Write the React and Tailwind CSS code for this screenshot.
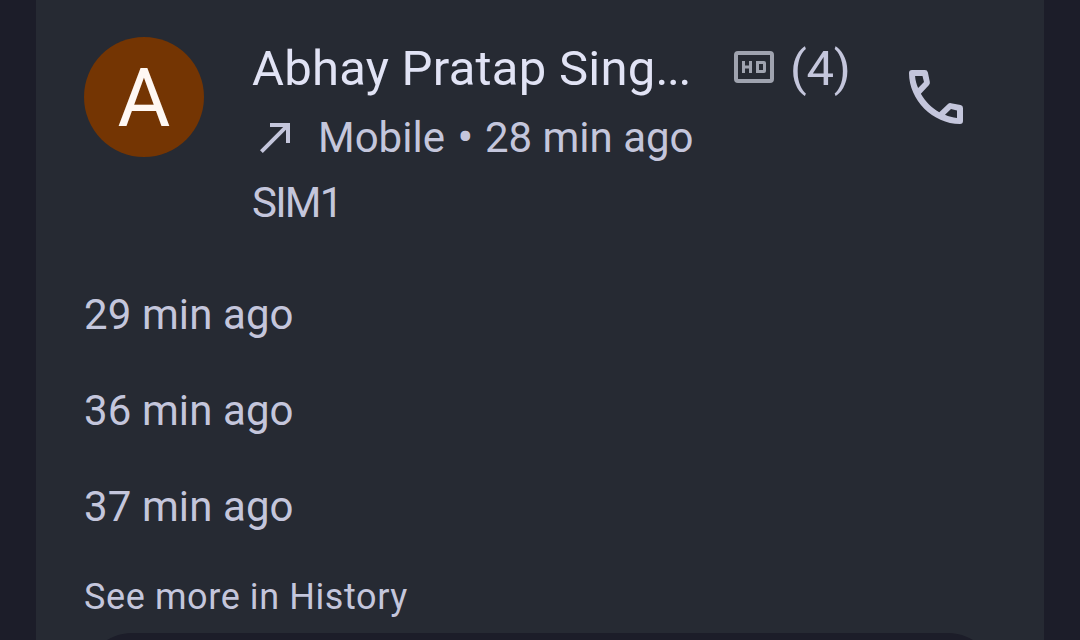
import React from 'react';

const olderCalls = ['29 min ago', '36 min ago', '37 min ago'];

const OutgoingIcon = () => (
  <svg viewBox="0 0 24 24" className="w-12 h-12 shrink-0" fill="currentColor">
    <path d="M9 5v2h6.59L4 18.59 5.41 20 17 8.41V15h2V5z" />
  </svg>
);

const HdIcon = () => (
  <svg viewBox="0 0 24 24" className="w-12 h-12 shrink-0 text-[#9fa3af]" fill="currentColor">
    <path
      fillRule="evenodd"
      d="M4 4h16a2 2 0 0 1 2 2v12a2 2 0 0 1-2 2H4a2 2 0 0 1-2-2V6a2 2 0 0 1 2-2zm0 2v12h16V6z"
    />
    <path d="M11 15V9H9.5v2.25h-2V9H6v6h1.5v-2.25h2V15z" />
    <path
      fillRule="evenodd"
      d="M13 9v6h4a1 1 0 0 0 1-1v-4a1 1 0 0 0-1-1zm1.5 1.5h2v3h-2z"
    />
  </svg>
);

const CallIcon = () => (
  <svg viewBox="0 0 24 24" className="w-[72px] h-[72px]" fill="currentColor">
    <path
      fillRule="evenodd"
      d="M4 3H8.3Q9.1 3 9.3 3.8L9.95 7Q10.05 7.6 9.6 8.1L6.95 10.9C8.4 13.5 10.5 15.6 13.1 17.05L15.9 14.4Q16.4 13.95 17 14.05L20.2 14.7Q21 14.9 21 15.7V20Q21 21 20 21C11 21 3 13 3 4Q3 3 4 3ZM5.02 5C5.12 6.4 5.5 7.8 6.05 9L8 7L7.5 5ZM19 18.98C17.6 18.88 16.2 18.5 15 17.95L17 16L19 16.5Z"
    />
  </svg>
);

const App = () => {
  return (
    <div className="w-[1080px] h-[640px] overflow-hidden bg-[#1c1d29] px-9 font-[Roboto,sans-serif] text-[#c4c6dc]">
      <div className="h-full flex flex-col bg-[#262a33] px-12">
        {/* Latest call */}
        <div className="flex h-[267px] shrink-0 items-start pt-[37px]">
          <div className="flex w-[120px] h-[120px] shrink-0 items-center justify-center rounded-full bg-[#743503] pt-1 text-[81px] leading-[120px] text-[#fff8f3]">
            A
          </div>

          <div className="ml-12 flex w-[648px] flex-col">
            <div className="flex h-[60px] items-center whitespace-nowrap text-[49px] leading-[60px]">
              <h1 className="w-[478px] pt-1 tracking-[0.25px] text-[#e1e3f5]">
                Abhay Pratap Sing<span className="tracking-[-1.4px]">...</span>
              </h1>
              <HdIcon />
              <span className="ml-3 pt-1 tracking-[-0.3px]">(4)</span>
            </div>
            <div className="mt-4 flex h-12 items-center whitespace-nowrap text-[42px] leading-[48px]">
              <OutgoingIcon />
              <p className="ml-[18px] flex items-center pt-0.5">
                <span>Mobile</span>
                <span className="ml-1 mr-[3px] w-[33px] text-center text-[48px] leading-[48px]">•</span>
                <span>28 min ago</span>
              </p>
            </div>
            <p className="mt-[18px] text-[42px] leading-[48px] tracking-[-1.8px]">SIM1</p>
          </div>

          <button aria-label="Call" className="mt-6">
            <CallIcon />
          </button>
        </div>

        {/* Older calls */}
        <ul className="shrink-0 text-[42px] tracking-[0.1px]">
          {olderCalls.map((time) => (
            <li key={time} className="flex h-24 items-center leading-[96px]">
              {time}
            </li>
          ))}
        </ul>

        <p className="mt-[18px] h-[60px] shrink-0 text-[36px] leading-[48px] tracking-[0.6px]">
          See more in History
        </p>

        <div className="h-24 shrink-0 rounded-[48px] bg-[#1c1d29]" />
      </div>
    </div>
  );
};

export default App;
